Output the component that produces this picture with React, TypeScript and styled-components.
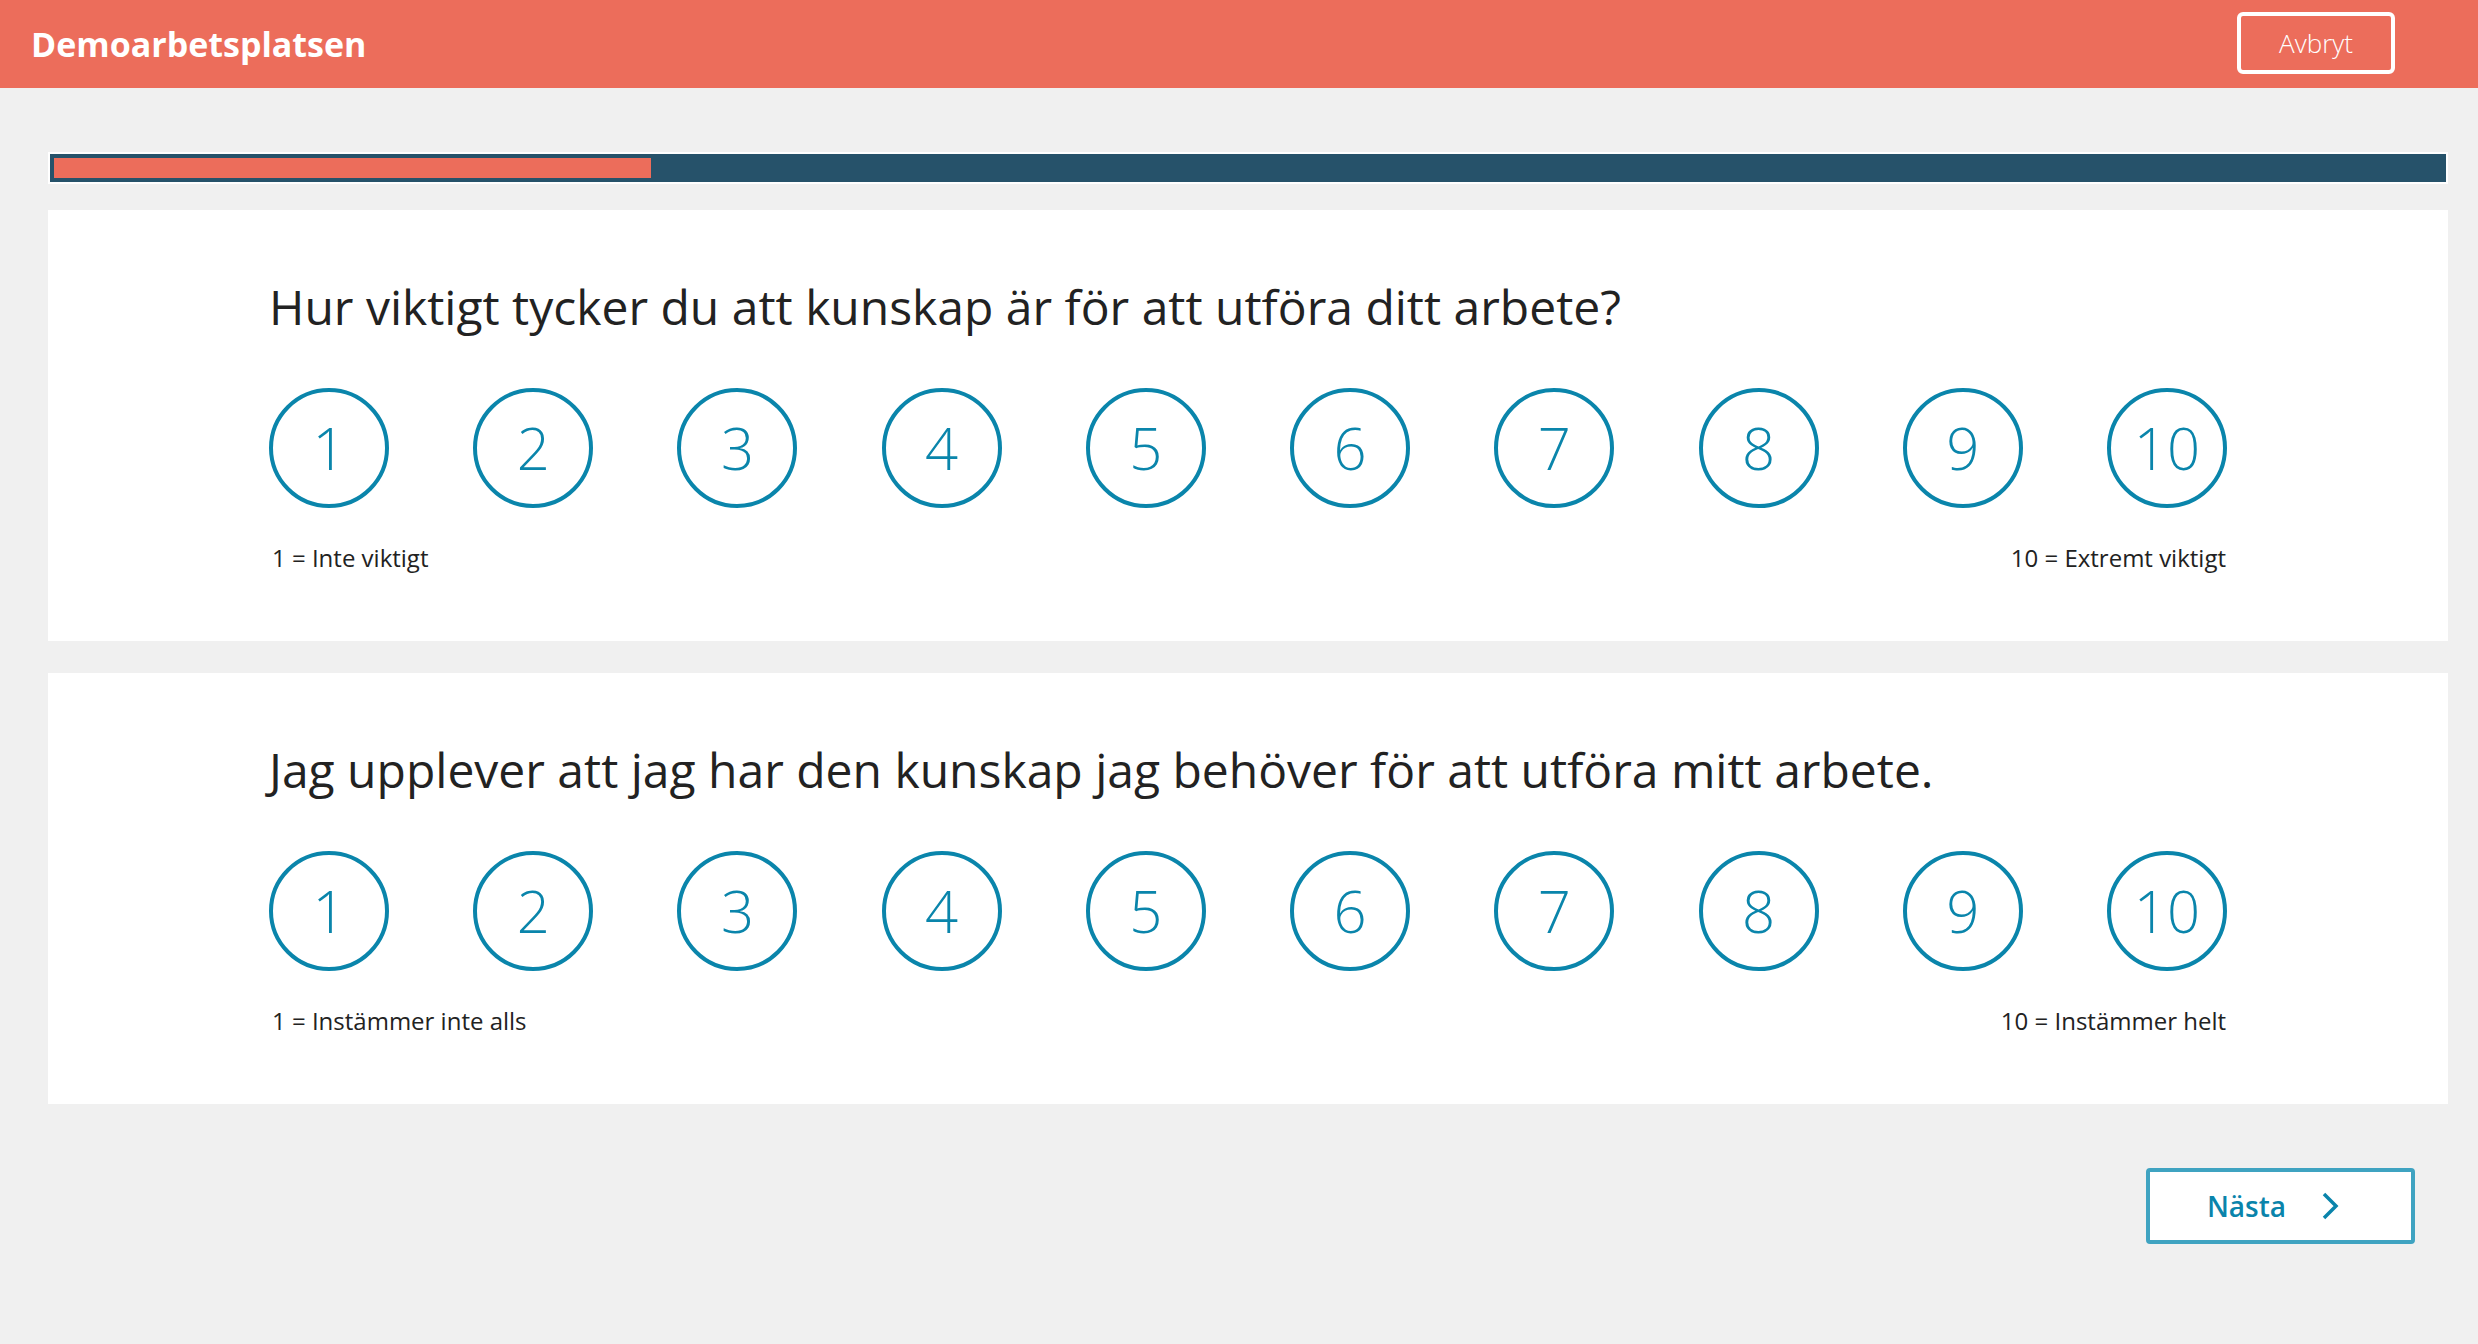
import React from "react";
import styled, { createGlobalStyle } from "styled-components";

const GlobalStyle = createGlobalStyle`
  html, body {
    margin: 0;
    padding: 0;
    background: #f0f0f0;
    font-family: "Open Sans", "Noto Sans", Arial, sans-serif;
  }
  * { box-sizing: border-box; }
`;

const Header = styled.header`
  height: 88px;
  background: #ec6d5b;
  display: flex;
  align-items: center;
  justify-content: space-between;
  padding: 0 83px 0 31px;
`;

const Brand = styled.h1`
  margin: 0;
  color: #fff;
  font-size: 34px;
  font-weight: 700;
  letter-spacing: 0;
`;

const CancelButton = styled.button`
  width: 158px;
  height: 62px;
  margin-bottom: 3px;
  border: 4px solid #fff;
  border-radius: 6px;
  background: transparent;
  color: #fff;
  font-family: inherit;
  font-size: 26px;
  font-weight: 300;
  cursor: pointer;
`;

const Main = styled.main`
  padding: 64px 30px 40px 48px;
  display: flex;
  flex-direction: column;
`;

const ProgressTrack = styled.div`
  height: 32px;
  border: 2px solid #fff;
  background: #26526a;
  padding: 4px 4px;
  margin-bottom: 26px;
`;

const ProgressFill = styled.div`
  height: 100%;
  background: #ec6d5b;
`;

const Card = styled.section`
  background: #fff;
  padding: 68px 0 67px;
  & + & {
    margin-top: 32px;
  }
`;

const CardInner = styled.div`
  width: 1958px;
  margin: 0 auto;
  display: flex;
  flex-direction: column;
`;

const Question = styled.h2`
  margin: 0 0 52px;
  font-size: 48px;
  line-height: 1.2;
  font-weight: 400;
  color: #222;
`;

const Scale = styled.div`
  display: flex;
  justify-content: space-between;
`;

const ScaleOption = styled.button`
  width: 120px;
  height: 120px;
  border-radius: 50%;
  border: 4px solid #0a85ab;
  background: #fff;
  color: #0a85ab;
  font-family: inherit;
  font-size: 58px;
  font-weight: 300;
  line-height: 1;
  padding: 0;
  display: flex;
  align-items: center;
  justify-content: center;
  cursor: pointer;
`;

const Legend = styled.div`
  display: flex;
  justify-content: space-between;
  margin-top: 33px;
  padding: 0 1px 0 3px;
  font-size: 24px;
  line-height: 1.4;
  color: #222;
`;

const Footer = styled.div`
  display: flex;
  justify-content: flex-end;
  padding: 64px 33px 0 0;
`;

const NextButton = styled.button`
  width: 269px;
  height: 76px;
  border: 4px solid #3fa3c1;
  border-radius: 4px;
  background: #fff;
  color: #0a84ab;
  font-family: inherit;
  font-size: 28px;
  font-weight: 600;
  display: flex;
  align-items: center;
  justify-content: center;
  gap: 34px;
  padding: 0 14px 0 0;
  cursor: pointer;
`;

const questions = [
  {
    text: "Hur viktigt tycker du att kunskap är för att utföra ditt arbete?",
    low: "1 = Inte viktigt",
    high: "10 = Extremt viktigt",
  },
  {
    text: "Jag upplever att jag har den kunskap jag behöver för att utföra mitt arbete.",
    low: "1 = Instämmer inte alls",
    high: "10 = Instämmer helt",
  },
];

const Chevron = () => (
  <svg width="20" height="28" viewBox="0 0 20 28" aria-hidden="true">
    <polyline
      points="4,2 16,14 4,26"
      fill="none"
      stroke="#0a84ab"
      strokeWidth="3.5"
      strokeLinecap="butt"
      strokeLinejoin="miter"
    />
  </svg>
);

export default function App() {
  return (
    <>
      <GlobalStyle />
      <Header>
        <Brand>Demoarbetsplatsen</Brand>
        <CancelButton>Avbryt</CancelButton>
      </Header>
      <Main>
        <ProgressTrack>
          <ProgressFill style={{ width: "25%" }} />
        </ProgressTrack>
        {questions.map((q) => (
          <Card key={q.text}>
            <CardInner>
              <Question>{q.text}</Question>
              <Scale>
                {Array.from({ length: 10 }, (_, i) => (
                  <ScaleOption key={i}>{i + 1}</ScaleOption>
                ))}
              </Scale>
              <Legend>
                <span>{q.low}</span>
                <span>{q.high}</span>
              </Legend>
            </CardInner>
          </Card>
        ))}
        <Footer>
          <NextButton>
            Nästa
            <Chevron />
          </NextButton>
        </Footer>
      </Main>
    </>
  );
}
